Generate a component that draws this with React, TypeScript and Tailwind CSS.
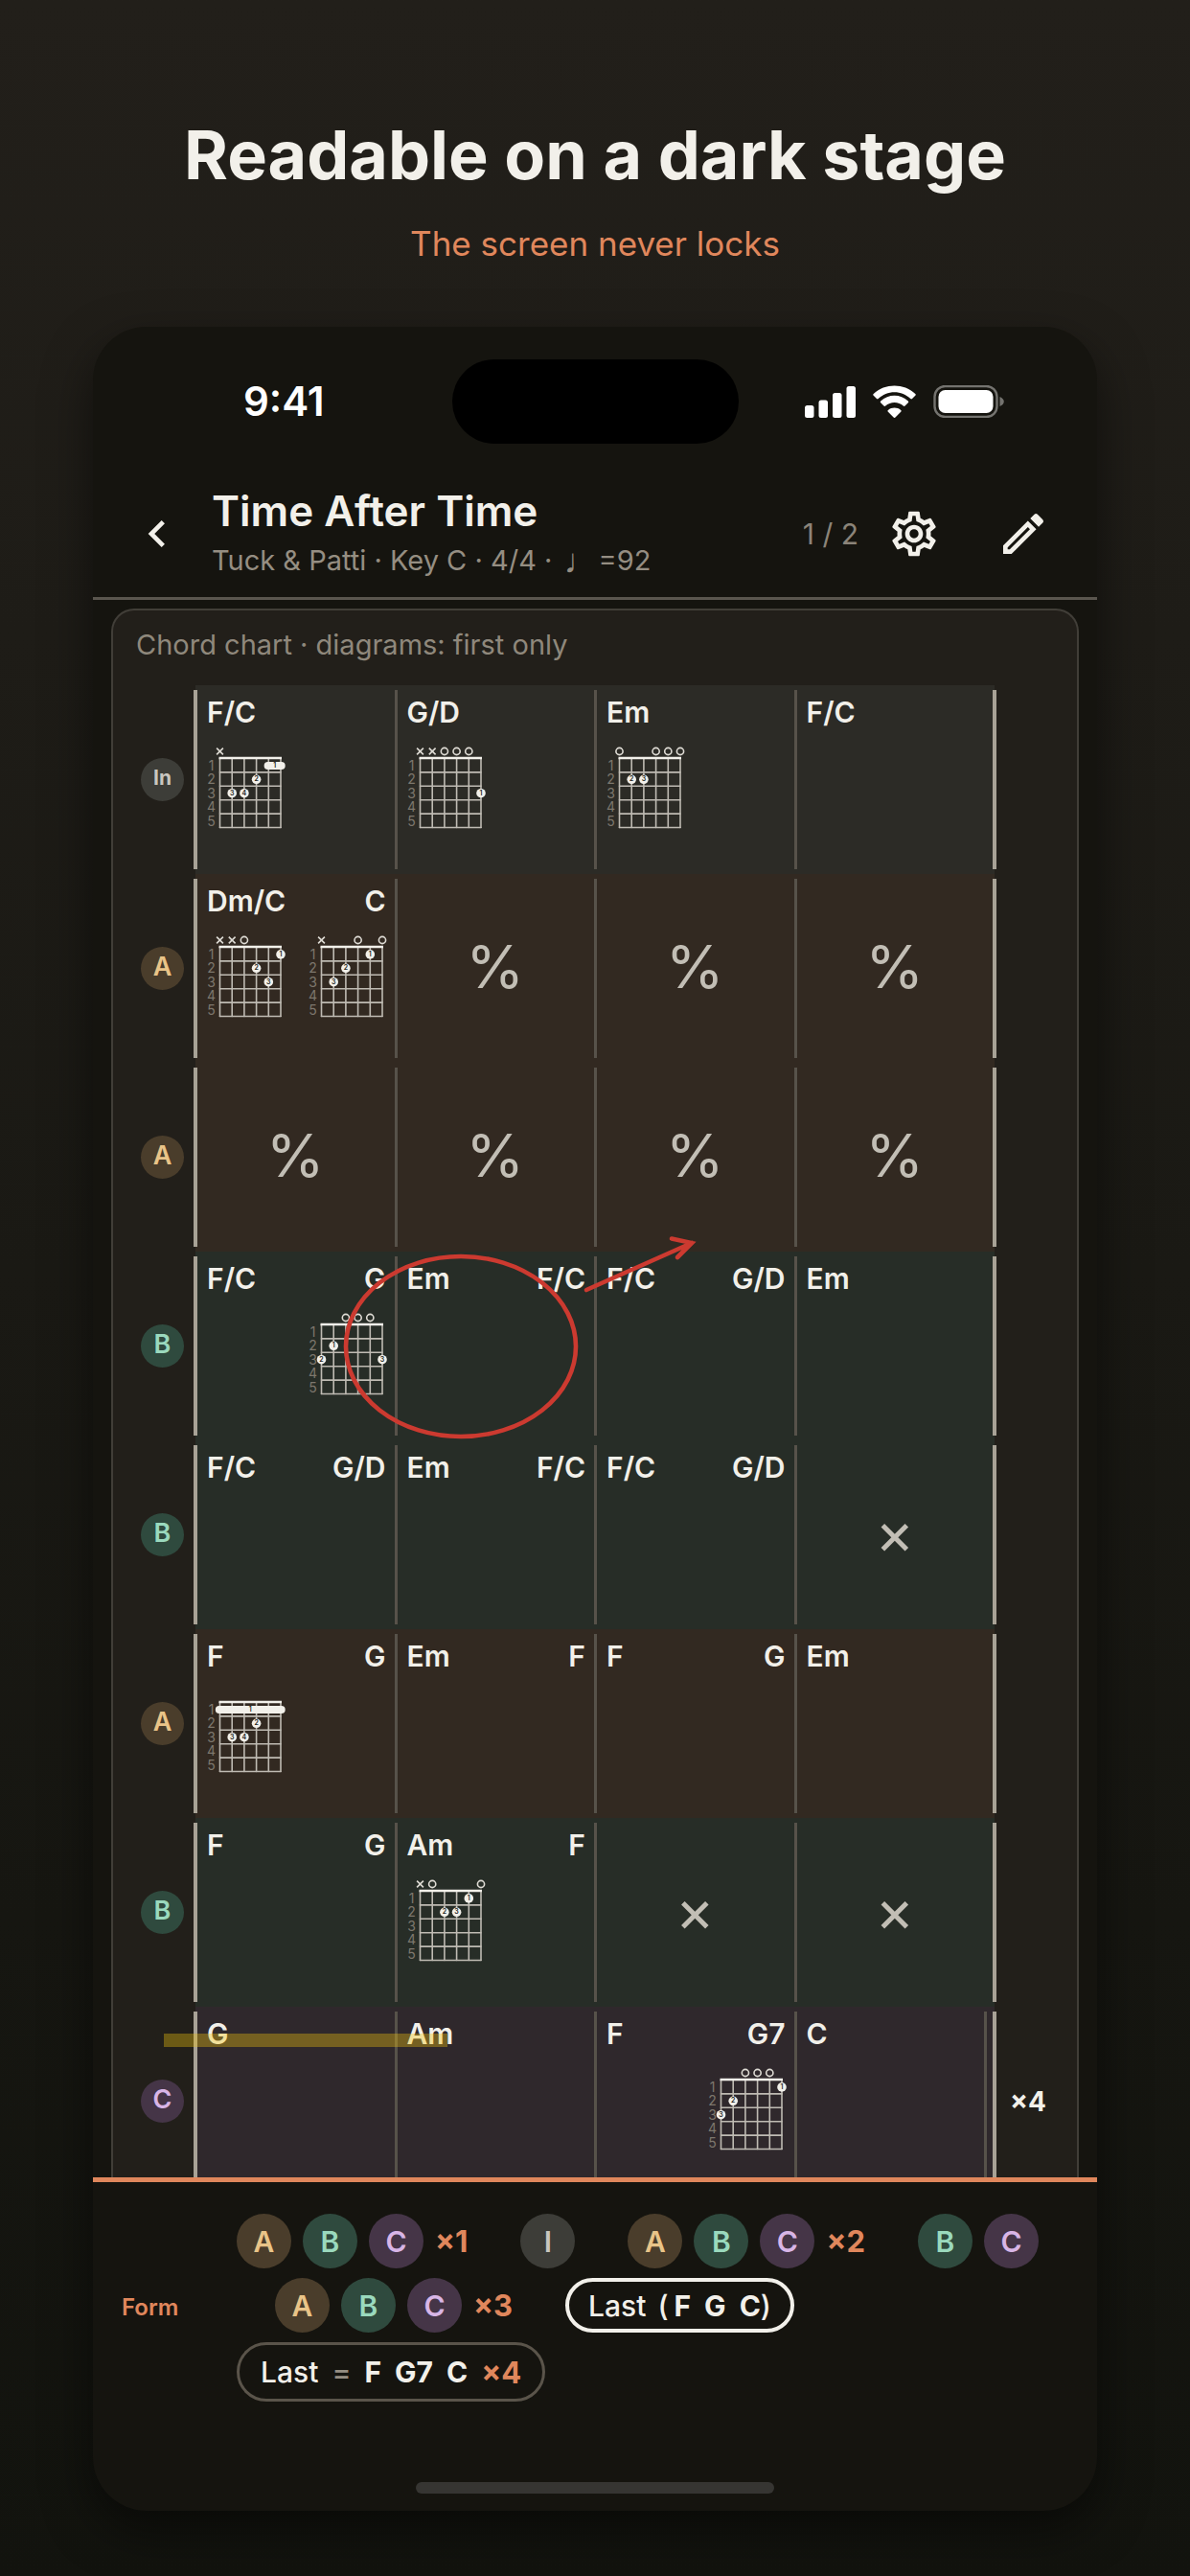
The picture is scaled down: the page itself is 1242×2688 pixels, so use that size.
import type { ReactNode } from "react";
import { MdChevronLeft, MdOutlineEdit, MdOutlineSettings } from "react-icons/md";

type Section = "In" | "I" | "A" | "B" | "C";

type Dot = { string: number; fret: number; finger: number };
type Shape = {
  top: string;
  dots: Dot[];
  barre?: { from: number; to: number; fret: number };
};
type Chord = { name: string; shape?: Shape };
type Bar = Chord[] | "%" | "×";
type Line = { section: Section; bars: Bar[]; repeat?: string };

const badgeColors: Record<Section, string> = {
  In: "bg-[#3d3d38] text-[#c9c6bf]",
  I: "bg-[#3d3d38] text-[#c9c6bf]",
  A: "bg-[#4a3d2b] text-[#e9c488]",
  B: "bg-[#2f4a3e] text-[#9ad9bd]",
  C: "bg-[#453547] text-[#d8b5e6]",
};

const rowColors: Record<Section, string> = {
  In: "bg-[#2c2b26]",
  I: "bg-[#2c2b26]",
  A: "bg-[#322921]",
  B: "bg-[#272d27]",
  C: "bg-[#2f282c]",
};

const d = (string: number, fret: number, finger: number): Dot => ({ string, fret, finger });

// The six marks in "top" run from the low string to the high one.
const shapes: Record<string, Shape> = {
  "F/C": { top: "x     ", dots: [d(3, 2, 2), d(1, 3, 3), d(2, 3, 4)], barre: { from: 4, to: 5, fret: 1 } },
  "G/D": { top: "xxooo ", dots: [d(5, 3, 1)] },
  Em: { top: "o  ooo", dots: [d(1, 2, 2), d(2, 2, 3)] },
  "Dm/C": { top: "xxo   ", dots: [d(5, 1, 1), d(3, 2, 2), d(4, 3, 3)] },
  C: { top: "x  o o", dots: [d(4, 1, 1), d(2, 2, 2), d(1, 3, 3)] },
  G: { top: "  ooo ", dots: [d(1, 2, 1), d(0, 3, 2), d(5, 3, 3)] },
  F: { top: "      ", dots: [d(3, 2, 2), d(1, 3, 3), d(2, 3, 4)], barre: { from: 0, to: 5, fret: 1 } },
  Am: { top: "xo   o", dots: [d(4, 1, 1), d(2, 2, 2), d(3, 2, 3)] },
  G7: { top: "  ooo ", dots: [d(5, 1, 1), d(1, 2, 2), d(0, 3, 3)] },
};

const c = (name: string, withShape = false): Chord => ({
  name,
  shape: withShape ? shapes[name] : undefined,
});

const lines: Line[] = [
  { section: "In", bars: [[c("F/C", true)], [c("G/D", true)], [c("Em", true)], [c("F/C")]] },
  { section: "A", bars: [[c("Dm/C", true), c("C", true)], "%", "%", "%"] },
  { section: "A", bars: ["%", "%", "%", "%"] },
  { section: "B", bars: [[c("F/C"), c("G", true)], [c("Em"), c("F/C")], [c("F/C"), c("G/D")], [c("Em")]] },
  { section: "B", bars: [[c("F/C"), c("G/D")], [c("Em"), c("F/C")], [c("F/C"), c("G/D")], "×"] },
  { section: "A", bars: [[c("F", true), c("G")], [c("Em"), c("F")], [c("F"), c("G")], [c("Em")]] },
  { section: "B", bars: [[c("F"), c("G")], [c("Am", true), c("F")], "×", "×"] },
  { section: "C", bars: [[c("G")], [c("Am")], [c("F"), c("G7", true)], [c("C")]], repeat: "×4" },
];

function Diagram({ shape }: { shape: Shape }) {
  const x = (s: number) => 13.5 + s * 12.7;
  const y = (f: number) => 15.5 + f * 14.4;
  const mid = (f: number) => y(f) - 7;
  return (
    <svg width="81" height="90" className="mt-[15px] overflow-visible" aria-hidden="true">
      {[1, 2, 3, 4, 5].map((f) => (
        <text key={f} x="4.5" y={mid(f) + 5} fontSize="14" textAnchor="middle" fill="#7d776d">
          {f}
        </text>
      ))}
      <g stroke="#bfbbb3" strokeWidth="1.6" strokeLinecap="round">
        {[0, 1, 2, 3, 4, 5].map((s) => (
          <line key={s} x1={x(s)} x2={x(s)} y1={y(0)} y2={y(5)} />
        ))}
        {[1, 2, 3, 4, 5].map((f) => (
          <line key={f} x1={x(0)} x2={x(5)} y1={y(f)} y2={y(f)} />
        ))}
      </g>
      <line x1={x(0) - 1} x2={x(5) + 1} y1="15" y2="15" stroke="#f2f0ea" strokeWidth="2.6" />
      <g stroke="#dedbd4" strokeWidth="1.6" fill="none">
        {shape.top.split("").map((m, s) =>
          m === "o" ? (
            <circle key={s} cx={x(s)} cy="8" r="3.6" />
          ) : m === "x" ? (
            <path key={s} d={`M${x(s) - 3.4} 4.6l6.8 6.8m0 -6.8l-6.8 6.8`} />
          ) : null
        )}
      </g>
      {shape.barre && (
        <>
          <rect
            x={x(shape.barre.from) - 4.7}
            y={mid(shape.barre.fret) - 4}
            width={x(shape.barre.to) - x(shape.barre.from) + 9.4}
            height="8"
            rx="4"
            fill="#f2f0ea"
          />
          <text
            x={(x(shape.barre.from) + x(shape.barre.to)) / 2}
            y={mid(shape.barre.fret) + 2}
            fontSize="7"
            fontWeight="600"
            textAnchor="middle"
            fill="#221f1a"
          >
            1
          </text>
        </>
      )}
      {shape.dots.map((dot) => (
        <g key={dot.string}>
          <circle cx={x(dot.string)} cy={mid(dot.fret)} r="4.8" fill="#f2f0ea" />
          <text
            x={x(dot.string)}
            y={mid(dot.fret) + 2}
            fontSize="7"
            fontWeight="600"
            textAnchor="middle"
            fill="#221f1a"
          >
            {dot.finger}
          </text>
        </g>
      ))}
    </svg>
  );
}

function BarCell({ bar }: { bar: Bar }) {
  if (typeof bar === "string") {
    return (
      <div className="flex h-full items-center justify-center pb-1 text-[62px] leading-none text-[#c2beb5]">
        {bar}
      </div>
    );
  }
  return (
    <div className="flex justify-between pt-[10px] pr-[10px] pl-3">
      {bar.map((chord, i) => (
        <div key={i} className={i === 0 ? "flex flex-col items-start" : "flex flex-col items-end"}>
          <span className="text-[30px] leading-9 font-semibold">{chord.name}</span>
          {chord.shape && <Diagram shape={chord.shape} />}
        </div>
      ))}
    </div>
  );
}

const Thick = () => <div className="-mx-0.5 my-[5px] w-1 bg-[#a8a296]" />;
const Thin = () => <div className="-mr-0.5 -ml-px my-[5px] w-[3px] bg-[#57524a]" />;

function ChartLine({ line }: { line: Line }) {
  const small = line.section === "In";
  return (
    <div className="grid h-[197px] grid-cols-[86px_1fr_86px] items-stretch">
      <div className="flex items-center justify-center pl-[17px]">
        <span
          className={`flex size-[45px] items-center justify-center rounded-full pb-1 leading-none ${
            small ? "text-[21px] font-bold" : "text-[27px] font-semibold"
          } ${badgeColors[line.section]}`}
        >
          {line.section}
        </span>
      </div>
      <div className={`flex ${rowColors[line.section]}`}>
        <Thick />
        {line.bars.map((bar, i) => (
          <div key={i} className="contents">
            {i > 0 && <Thin />}
            <div className="w-0 flex-1">
              <BarCell bar={bar} />
            </div>
          </div>
        ))}
        {line.repeat && (
          <div className="-ml-2.5 flex w-2.5">
            <Thin />
          </div>
        )}
        <Thick />
      </div>
      <div className="flex items-center pl-4 text-[28px] leading-none font-bold">{line.repeat}</div>
    </div>
  );
}

function Annotations() {
  return (
    <svg className="pointer-events-none absolute inset-0 size-full" aria-hidden="true">
      <g fill="none" stroke="#cc3a30" strokeWidth="4.6" strokeLinecap="round">
        <ellipse cx="363" cy="690" rx="120" ry="94" />
        <path d="M494 631L604 582M583 577.5L604 582L589 597" />
      </g>
      <rect x="53" y="1407" width="296" height="14" fill="#f1c40f" fillOpacity="0.36" />
    </svg>
  );
}

function Chip({ section }: { section: Section }) {
  return (
    <span
      className={`flex size-[57px] items-center justify-center rounded-full text-[30px] leading-none font-semibold ${badgeColors[section]}`}
    >
      {section}
    </span>
  );
}

function Group({ sections, times }: { sections: Section[]; times?: string }) {
  return (
    <div className="flex items-center gap-3">
      {sections.map((s) => (
        <Chip key={s} section={s} />
      ))}
      {times && <Times>{times}</Times>}
    </div>
  );
}

function Times({ children }: { children: ReactNode }) {
  return <span className="text-[31px] leading-none font-bold text-[#e0875c]">{children}</span>;
}

function StatusIcons() {
  return (
    <svg width="208" height="34" viewBox="0 0 208 34" aria-label="Signal, Wi-Fi and battery">
      <g fill="#fff">
        <rect x="0" y="21" width="9.5" height="13" rx="2.5" />
        <rect x="14.5" y="15.5" width="9.5" height="18.5" rx="2.5" />
        <rect x="29" y="8" width="9.5" height="26" rx="2.5" />
        <rect x="43.5" y="1" width="9.5" height="33" rx="2.5" />
        <path d="M93.5 7.2c6.3 0 12.3 2.5 16.8 6.9a1.2 1.2 0 0 0 1.7 0l3.3-3.3a1.3 1.3 0 0 0 0-1.9C103.2-2.4 83.8-2.4 71.7 8.9a1.3 1.3 0 0 0 0 1.9l3.3 3.3a1.2 1.2 0 0 0 1.7 0C81.2 9.7 87.2 7.2 93.5 7.2z" />
        <path d="M93.5 18c3.5 0 6.8 1.3 9.3 3.6a1.2 1.2 0 0 0 1.7 0l3.3-3.3a1.3 1.3 0 0 0 0-1.9c-8-7.5-20.5-7.5-28.6 0a1.3 1.3 0 0 0 0 1.9l3.3 3.3a1.2 1.2 0 0 0 1.7 0c2.6-2.3 5.9-3.6 9.3-3.6z" />
        <path d="M100.2 25.9a1.2 1.2 0 0 1 0 1.8l-5.7 5.8a1.3 1.3 0 0 1-1.9 0l-5.7-5.8a1.2 1.2 0 0 1 0-1.8c3.8-3.2 9.5-3.2 13.3 0z" />
        <rect x="139.5" y="5" width="57" height="24" rx="7" />
      </g>
      <rect x="135.5" y="1" width="65" height="32" rx="11" fill="none" stroke="#74736f" strokeWidth="2.4" />
      <path d="M203.5 12c2.6 1 4.3 3 4.3 5s-1.7 4-4.3 5z" fill="#74736f" />
    </svg>
  );
}

export default function App() {
  return (
    <div className="flex h-screen flex-col bg-linear-to-b from-[#221f1a] to-[#12130e] px-[97px] pt-[118px] pb-[68px] font-['Inter','Noto_Sans',sans-serif] text-[#f2f0ea]">
      <h1 className="text-center text-[70px] leading-[88px] font-bold">Readable on a dark stage</h1>
      <p className="mt-6 text-center text-[35px] leading-[48px] text-[#e0875c]">The screen never locks</p>

      <main className="mt-[63px] flex min-h-0 flex-1 flex-col overflow-hidden rounded-[56px] bg-[#15140f] shadow-[0_20px_50px_rgba(0,0,0,0.5)]">
        <div className="mt-[34px] grid grid-cols-[1fr_299px_1fr] items-center">
          <div className="pl-6 text-center text-[42px] leading-none font-semibold text-white">9:41</div>
          <div className="h-[88px] rounded-full bg-black" />
          <div className="flex justify-center pr-7">
            <StatusIcons />
          </div>
        </div>

        <header className="mt-[27px] flex h-[136px] shrink-0 items-center border-b-3 border-[#5a564e] pr-[49px] pl-[39px]">
          <button type="button" aria-label="Back">
            <MdChevronLeft className="size-14" />
          </button>
          <div className="ml-[29px] min-w-0 flex-1">
            <h2 className="text-[44px] leading-[56px] font-semibold">Time After Time</h2>
            <p className="flex h-12 items-center text-[29px] leading-none whitespace-pre text-[#958e82]">
              {"Tuck & Patti · Key C · 4/4 · "}
              <span className="ml-1 text-[36px]">♩</span>
              {"=92"}
            </p>
          </div>
          <span className="text-[30px] leading-none text-[#8b8479]">1 / 2</span>
          <button type="button" aria-label="Settings" className="ml-[30px]">
            <MdOutlineSettings className="size-14" />
          </button>
          <button type="button" aria-label="Edit" className="ml-[58px]">
            <MdOutlineEdit className="size-14" />
          </button>
        </header>

        <div className="min-h-0 flex-1 overflow-hidden px-[19px] pt-[9px]">
          <section className="rounded-t-3xl border-2 border-b-0 border-[#413e38] bg-[#221f1a] pt-4">
            <h3 className="px-6 text-[29px] leading-10 text-[#8f887c]">Chord chart · diagrams: first only</h3>
            <div className="relative mt-[22px]">
              {lines.map((line, i) => (
                <ChartLine key={i} line={line} />
              ))}
              <Annotations />
            </div>
          </section>
        </div>

        <footer className="shrink-0 border-t-[5px] border-[#e0875c] pt-[33px] pb-[18px]">
          <div className="flex items-center pl-[30px]">
            <span className="w-[120px] text-[24px] leading-none font-semibold text-[#e0875c]">Form</span>
            <div className="flex flex-1 flex-col gap-[10px]">
              <div className="flex gap-[55px]">
                <Group sections={["A", "B", "C"]} times="×1" />
                <Group sections={["I"]} />
                <Group sections={["A", "B", "C"]} times="×2" />
                <Group sections={["B", "C"]} />
              </div>
              <div className="flex gap-[55px] pl-10">
                <Group sections={["A", "B", "C"]} times="×3" />
                <div className="flex items-center rounded-full border-4 border-[#f2f0ea] px-5 text-[30px] leading-none">
                  <span className="mr-3 font-medium">Last</span>
                  <span className="mr-1.5 font-medium">(</span>
                  <span className="flex gap-3.5 font-bold">
                    <span>F</span>
                    <span>G</span>
                    <span>C</span>
                  </span>
                  <span className="font-medium">)</span>
                </div>
              </div>
              <div className="flex">
                <div className="flex h-[62px] items-center gap-3.5 rounded-full border-3 border-[#5a544a] px-[22px] text-[30px] leading-none font-bold">
                  <span className="font-medium">Last</span>
                  <span className="font-medium text-[#958e82]">=</span>
                  <span>F</span>
                  <span>G7</span>
                  <span>C</span>
                  <Times>×4</Times>
                </div>
              </div>
            </div>
          </div>
          <div className="mx-auto mt-[84px] h-3 w-[374px] rounded-full bg-[#363532]" />
        </footer>
      </main>
    </div>
  );
}
